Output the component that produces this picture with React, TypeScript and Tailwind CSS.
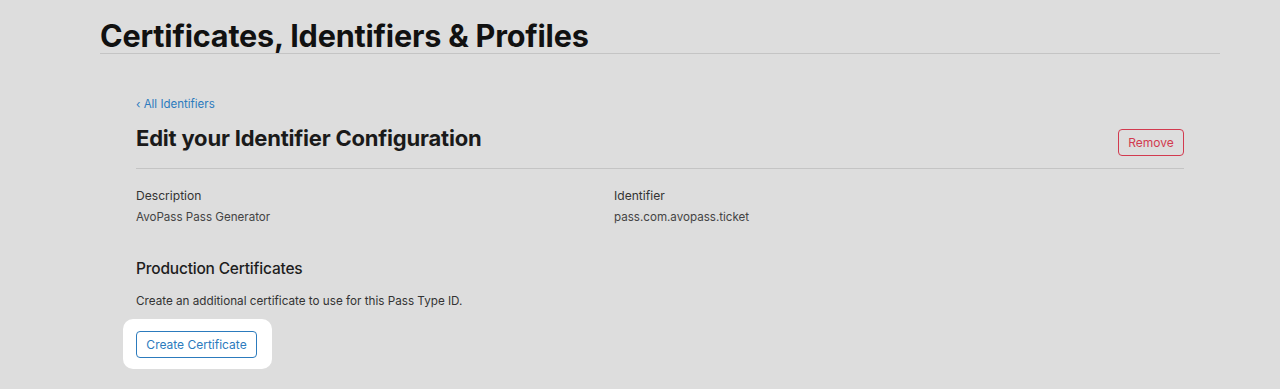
import React from 'react';

const font = { fontFamily: 'Inter, "Noto Sans", sans-serif' };

const DetailField: React.FC<{ label: string; value: string }> = ({ label, value }) => (
  <div className="flex flex-col">
    <span className="text-[12.1px] leading-[16px] text-[#333333]">{label}</span>
    <span className="mt-[5px] text-[11.6px] leading-[16px] text-[#444444]">{value}</span>
  </div>
);

const App: React.FC = () => {
  return (
    <div className="w-[1280px] h-[389px] bg-[#dddddd] overflow-hidden" style={font}>
      <div className="ml-[100px] w-[1120px]">
        <h1 className="pt-[18px] text-[30.6px] leading-[35px] font-bold tracking-[-0.2px] text-[#111111] border-b border-[#c4c4c4]">
          Certificates, Identifiers &amp; Profiles
        </h1>

        <div className="px-9">
          <a className="block mt-[42px] text-[11.5px] leading-[16px] text-[#2c7bbd]">‹ All Identifiers</a>

          <div className="mt-[12px] flex items-start justify-between border-b border-[#c4c4c4] pb-[12px]">
            <h2 className="text-[22px] leading-[28px] font-bold text-[#1a1a1a] tracking-[-0.2px]">
              Edit your Identifier Configuration
            </h2>
            <button className="mt-[5px] h-[27px] w-[66px] rounded-[4px] border border-[#d23a4f] text-[12px] text-[#d23a4f]">
              Remove
            </button>
          </div>

          <div className="mt-[19px] grid grid-cols-[478px_1fr]">
            <DetailField label="Description" value="AvoPass Pass Generator" />
            <DetailField label="Identifier" value="pass.com.avopass.ticket" />
          </div>

          <h3 className="mt-[33px] text-[15.5px] leading-[22px] font-medium text-[#1d1d1d] tracking-[-0.2px]">
            Production Certificates
          </h3>
          <p className="mt-[13px] text-[11.7px] leading-[16px] text-[#333333]">
            Create an additional certificate to use for this Pass Type ID.
          </p>

          <div className="mt-[10px] -ml-[13px] inline-flex rounded-[10px] bg-white pl-[13px] pr-[15px] pt-[12px] pb-[11px]">
            <button className="h-[27px] w-[121px] rounded-[4px] border border-[#2c7bbd] text-[12px] text-[#2c7bbd]">
              Create Certificate
            </button>
          </div>
        </div>
      </div>
    </div>
  );
};

export default App;
